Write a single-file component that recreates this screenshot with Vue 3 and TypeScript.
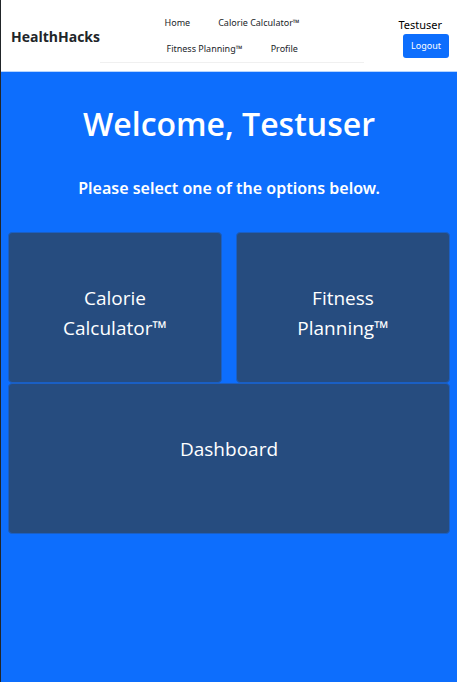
<script setup lang="ts">
interface LinkItem {
  label: string
  href: string
}

interface Tile extends LinkItem {
  wide?: boolean
}

const user = 'Testuser'

const navRows: LinkItem[][] = [
  [
    { label: 'Home', href: '#home' },
    { label: 'Calorie Calculator™', href: '#calories' },
  ],
  [
    { label: 'Fitness Planning™', href: '#fitness' },
    { label: 'Profile', href: '#profile' },
  ],
]

const tiles: Tile[] = [
  { label: 'Calorie Calculator™', href: '#calories' },
  { label: 'Fitness Planning™', href: '#fitness' },
  { label: 'Dashboard', href: '#dashboard', wide: true },
]
</script>

<template>
  <div class="page">
    <header class="header">
      <a class="brand" href="#home">HealthHacks</a>
      <nav class="nav" aria-label="Main">
        <div v-for="(row, i) in navRows" :key="i" class="nav-row">
          <a v-for="item in row" :key="item.label" class="nav-link" :href="item.href">{{ item.label }}</a>
        </div>
      </nav>
      <div class="account">
        <span class="user">{{ user }}</span>
        <button class="logout" type="button">Logout</button>
      </div>
    </header>
    <main class="main">
      <h1 class="title">Welcome, {{ user }}</h1>
      <p class="lead">Please select one of the options below.</p>
      <div class="tiles">
        <a
          v-for="tile in tiles"
          :key="tile.label"
          class="tile"
          :class="{ wide: tile.wide }"
          :href="tile.href"
        ><span class="tile-label">{{ tile.label }}</span></a>
      </div>
    </main>
  </div>
</template>

<style>
body {
  margin: 0;
}
</style>

<style scoped>
.page {
  box-sizing: border-box;
  min-height: 100vh;
  display: flex;
  flex-direction: column;
  border-left: 1px solid #212529;
  background: #0d6efd;
  color: #fff;
  font-family: "Open Sans", "Noto Sans", sans-serif;
}

.header {
  display: flex;
  align-items: center;
  padding: 10px 8px 8px 10px;
  border-bottom: 1px solid #b6d4fe;
  background: #fff;
}

.brand {
  color: #212529;
  font-size: 14px;
  font-weight: 700;
  line-height: 24px;
  text-decoration: none;
}

.nav {
  flex: 1;
  margin: 0 34px 0 0;
  border-bottom: 1px solid #f0f0f0;
}

.nav-row {
  display: flex;
  justify-content: center;
  gap: 28px;
}

.nav-link {
  color: #212529;
  font-family: "Noto Sans", "Open Sans", sans-serif;
  font-size: 9px;
  line-height: 26px;
  text-decoration: none;
  white-space: nowrap;
}

.account {
  display: flex;
  flex-direction: column;
  align-items: flex-end;
}

.user {
  padding-right: 7px;
  color: #000;
  font-family: "Noto Sans", "Open Sans", sans-serif;
  font-size: 11px;
  line-height: 18px;
}

.logout {
  height: 24px;
  padding: 0 8px;
  border: 0;
  border-radius: 3px;
  background: #0d6efd;
  color: #fff;
  font: 9px/24px "Noto Sans", "Open Sans", sans-serif;
}

.main {
  flex: 1;
  padding: 30px 7px;
  text-align: center;
}

.title {
  margin: 0;
  font-size: 32px;
  font-weight: 600;
  line-height: 44px;
}

.lead {
  margin: 30px 0 32px;
  font-family: "Noto Sans", "Open Sans", sans-serif;
  font-size: 16px;
  font-weight: 600;
  line-height: 24px;
}

.tiles {
  display: grid;
  grid-template-columns: 1fr 1fr;
  column-gap: 14px;
}

.tile {
  box-sizing: border-box;
  min-height: 151px;
  padding: 50px 48px 39px;
  border: 1px solid #1a5fc4;
  border-radius: 4px;
  background: #264c7f;
  color: #fff;
  font-size: 19px;
  line-height: 30px;
  text-decoration: none;
}

.wide {
  grid-column: 1 / -1;
}
</style>
